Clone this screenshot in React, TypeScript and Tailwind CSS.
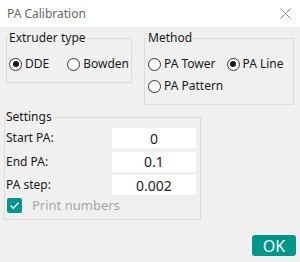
import { useState } from 'react';

function Radio({ label, checked, onClick }: { label: string; checked: boolean; onClick: () => void }) {
  return (
    <button type="button" onClick={onClick} className="flex h-[16px] items-center gap-[3px] text-[12px] text-[#1a1a1a]">
      <span className="flex h-[13px] w-[13px] items-center justify-center rounded-full border border-[#333333] bg-white">
        {checked && <span className="h-[6px] w-[6px] rounded-full bg-[#1a1a1a]" />}
      </span>
      <span>{label}</span>
    </button>
  );
}

function SettingRow({ label, value }: { label: string; value: string }) {
  return (
    <div className="flex h-[20px] items-center">
      <span className="w-[106px] text-[12px] text-[#1a1a1a]">{label}</span>
      <div className="flex h-[20px] w-[84px] items-center justify-center bg-white text-[14px] text-[#222222]">
        {value}
      </div>
    </div>
  );
}

export default function App() {
  const [extruder, setExtruder] = useState('DDE');
  const [method, setMethod] = useState('PA Line');

  return (
    <div className="flex h-[262px] w-[300px] flex-col bg-[#f0f0f0] font-['Noto_Sans',sans-serif]">
      <div className="flex h-[27px] items-center justify-between bg-white pl-[7px] pr-[9px]">
        <span className="text-[12px] text-[#666666]">PA Calibration</span>
        <svg width="11" height="11" viewBox="0 0 11 11" fill="none" stroke="#8a8a8a" strokeWidth="1">
          <path d="M0.5 0.5 L10.5 10.5 M10.5 0.5 L0.5 10.5" />
        </svg>
      </div>

      <div className="mt-[3px] flex items-start px-[6px]">
        <fieldset className="w-[127px] border border-[#dcdcdc] px-[2px] pb-[10px]">
          <legend className="h-[16px] px-0 text-[12px] leading-[16px] text-[#1a1a1a]">Extruder type</legend>
          <div className="mt-[10px] flex gap-[18px]">
            <Radio label="DDE" checked={extruder === 'DDE'} onClick={() => setExtruder('DDE')} />
            <Radio label="Bowden" checked={extruder === 'Bowden'} onClick={() => setExtruder('Bowden')} />
          </div>
        </fieldset>

        <fieldset className="ml-[12px] w-[152px] border border-[#dcdcdc] px-[3px] pb-[10px]">
          <legend className="h-[16px] px-0 text-[12px] leading-[16px] text-[#1a1a1a]">Method</legend>
          <div className="mt-[10px] flex flex-col gap-[6px]">
            <div className="flex gap-[11px]">
              <Radio label="PA Tower" checked={method === 'PA Tower'} onClick={() => setMethod('PA Tower')} />
              <Radio label="PA Line" checked={method === 'PA Line'} onClick={() => setMethod('PA Line')} />
            </div>
            <Radio label="PA Pattern" checked={method === 'PA Pattern'} onClick={() => setMethod('PA Pattern')} />
          </div>
        </fieldset>
      </div>

      <fieldset className="ml-[4px] mt-[4px] w-[197px] border border-[#dcdcdc] px-[1px] pb-[6px]">
        <legend className="h-[16px] px-0 text-[12px] leading-[16px] text-[#1a1a1a]">Settings</legend>
        <div className="mt-[3px] flex flex-col gap-[3.5px]">
          <SettingRow label="Start PA:" value="0" />
          <SettingRow label="End PA:" value="0.1" />
          <SettingRow label="PA step:" value="0.002" />
        </div>
        <div className="mt-[3px] flex h-[15px] items-center gap-[10px] pl-[1px]">
          <span className="flex h-[15px] w-[15px] items-center justify-center rounded-[2px] bg-[#009688]">
            <svg width="11" height="11" viewBox="0 0 11 11" fill="none" stroke="white" strokeWidth="1.4">
              <path d="M1.5 5.5 L4.3 8.2 L9.5 2.8" />
            </svg>
          </span>
          <span className="text-[13px] text-[#a6a6a6]">Print numbers</span>
        </div>
      </fieldset>

      <div className="mt-[15px] flex justify-end pr-[4px]">
        <button type="button" className="flex h-[21px] w-[44px] items-center justify-center rounded-[3px] bg-[#009688] text-[16px] text-white">
          OK
        </button>
      </div>
    </div>
  );
}
